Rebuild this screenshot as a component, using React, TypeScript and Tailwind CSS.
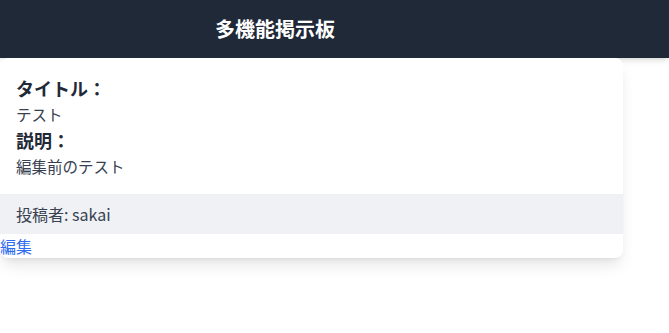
import React from "react";

export default function App() {
  return (
    <div
      className="min-h-[333px] bg-white text-gray-800"
      style={{ fontFamily: '"Noto Sans CJK JP", "Noto Sans", sans-serif' }}
    >
      <header className="bg-[#1f2937] shadow-md h-[58px] flex items-center pl-[215px]">
        <h1 className="text-white text-xl font-bold leading-7">多機能掲示板</h1>
      </header>
      <div className="w-[623px] bg-white rounded-lg shadow-lg overflow-hidden">
        <div className="p-4">
          <h2 className="text-lg font-bold leading-7 text-[#1f2937]">タイトル：</h2>
          <p className="text-[15.5px] leading-6 text-[#374151]">テスト</p>
          <h2 className="text-lg font-bold leading-7 text-[#1f2937]">説明：</h2>
          <p className="text-[15.5px] leading-6 text-[#374151]">編集前のテスト</p>
        </div>
        <div className="bg-[#f0f1f5] px-4 py-2 text-base leading-6 text-[#374151]">
          投稿者: sakai
        </div>
        <a href="#" className="block text-base leading-6 text-[#2f6bf0]">
          編集
        </a>
      </div>
    </div>
  );
}
